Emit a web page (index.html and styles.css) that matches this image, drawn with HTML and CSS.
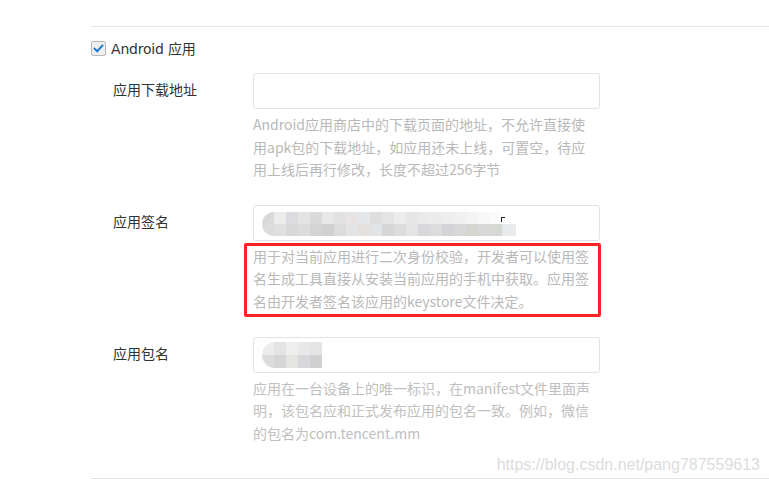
FILE: index.html
```html
<!DOCTYPE html>
<html lang="zh-CN">
<head>
<meta charset="utf-8">
<title>Android 应用</title>
<link rel="stylesheet" href="styles.css">
</head>
<body>
<div class="page">
  <div class="section">
    <label class="check-row">
      <span class="checkbox">
        <svg viewBox="0 0 12 12" width="11" height="11"><path d="M1.8 6.2 L4.6 9 L10.2 2.8" fill="none" stroke="#1b7fd4" stroke-width="2.2" stroke-linecap="square"/></svg>
      </span>
      <span class="check-label">Android 应用</span>
    </label>

    <div class="field">
      <div class="field-label">应用下载地址</div>
      <div class="field-body">
        <div class="input"></div>
        <p class="help">Android应用商店中的下载页面的地址，不允许直接使用apk包的下载地址，如应用还未上线，可置空，待应用上线后再行修改，长度不超过256字节</p>
      </div>
    </div>

    <div class="field">
      <div class="field-label">应用签名</div>
      <div class="field-body">
        <div class="input">
          <div class="blob blob-sign">
            <div class="blob-row row-a"></div>
            <div class="blob-row row-b"></div>
            <span class="caret"></span>
          </div>
        </div>
        <p class="help marked">用于对当前应用进行二次身份校验，开发者可以使用签名生成工具直接从安装当前应用的手机中获取。应用签名由开发者签名该应用的keystore文件决定。</p>
      </div>
    </div>

    <div class="field">
      <div class="field-label">应用包名</div>
      <div class="field-body">
        <div class="input">
          <div class="blob blob-pkg">
            <div class="blob-row row-c"></div>
            <div class="blob-row row-d"></div>
          </div>
        </div>
        <p class="help narrow">应用在一台设备上的唯一标识，在manifest文件里面声明，该包名应和正式发布应用的包名一致。例如，微信的包名为com.tencent.mm</p>
      </div>
    </div>

    <div class="footer">
      <span class="watermark">https://blog.csdn.net/pang787559613</span>
    </div>
  </div>
</div>
</body>
</html>
```

FILE: styles.css
```css
*, *::before, *::after { box-sizing: border-box; }
html, body {
  margin: 0;
  padding: 0;
  background: #ffffff;
}
body {
  font-family: "Noto Sans CJK SC", "Noto Sans", sans-serif;
  color: #333333;
  width: 769px;
  height: 483px;
  overflow: hidden;
}
.page {
  padding: 26px 0 0 91px;
}
.section {
  border-top: 1px solid #e6e6e6;
  padding-top: 12px;
}
.check-row {
  display: flex;
  align-items: center;
  gap: 5px;
  height: 18px;
}
.checkbox {
  width: 15px;
  height: 15px;
  border: 1px solid #b9b9b9;
  border-radius: 2px;
  background: #eeeeee;
  display: flex;
  align-items: center;
  justify-content: center;
}
.check-label {
  font-family: "DejaVu Sans", "Noto Sans CJK SC", sans-serif;
  font-size: 14px;
  color: #333333;
  letter-spacing: -0.2px;
}
.field {
  display: flex;
  margin-top: 16px;
}
.field + .field {
  margin-top: 24px;
}
.field-label {
  width: 162px;
  padding-left: 22px;
  font-size: 14px;
  line-height: 32px;
  color: #333333;
}
.field-body {
  width: 347px;
}
.input {
  height: 36px;
  border: 1px solid #e3e3e3;
  border-radius: 3px;
  background: #fff;
  padding: 6px 0 0 8px;
}
.help {
  margin: 4px 0 0 0;
  font-size: 14px;
  line-height: 22.6px;
  color: #b9b9b9;
  width: 346px;
  word-break: break-all;
}
.help.narrow {
  color: #c0c0c0;
}
.marked {
  position: relative;
}
.marked::after {
  content: "";
  position: absolute;
  left: -9px;
  top: -2px;
  width: 357px;
  height: 74px;
  border: 3px solid #ff2222;
  border-radius: 2px;
}
.blob {
  position: relative;
  border-radius: 12px 0 0 12px;
  overflow: hidden;
}
.blob-row {
  height: 12px;
}
.blob-sign { width: 254px; height: 24px; }
.row-a {
  width: 240px;
  background: linear-gradient(90deg,
    #d9d9d9 0 12px, #ececea 12px 24px, #dcdce0 24px 36px, #e4e4e4 36px 48px,
    #dadada 48px 60px, #e8e8e8 60px 72px, #e2e2e2 72px 84px, #e8e4e4 84px 96px,
    #e4e8ea 96px 108px, #dedede 108px 120px, #e4e4e4 120px 132px, #ececec 132px 144px,
    #e6e6e6 144px 156px, #eaeaea 156px 168px, #ececec 168px 180px, #eeeeee 180px 192px,
    #f0f0f0 192px 204px, #f4f4f4 204px 216px, #f8f8f8 216px 228px, #fbfbfb 228px 240px);
}
.row-b {
  width: 254px;
  background: linear-gradient(90deg,
    #dcdcdc 0 12px, #e0e0e0 12px 24px, #d8d8d8 24px 36px, #dcdcdc 36px 48px,
    #d4d4d4 48px 60px, #d0d0d0 60px 72px, #dcdcdc 72px 84px, #e2e4e6 84px 96px,
    #e4e0de 96px 108px, #e0e4e6 108px 120px, #d6d6d6 120px 132px, #dcdcdc 132px 144px,
    #e4e4e4 144px 156px, #d8d8dc 156px 168px, #dcdcdc 168px 180px, #d4d4d8 180px 192px,
    #d8d8d8 192px 204px, #d4d6d0 204px 216px, #d8d8d8 216px 228px, #d6d8d4 228px 240px,
    #e8eaec 240px 254px);
}
.caret {
  position: absolute;
  left: 239px;
  top: 5px;
  width: 4px;
  height: 5px;
  border-left: 1px solid #222;
  border-top: 1px solid #222;
}
.blob-pkg { width: 60px; height: 26px; margin-top: -2px; border-radius: 13px 0 0 13px; }
.row-c {
  height: 13px;
  background: linear-gradient(90deg,
    #ececec 0 12px, #e4e4e4 12px 24px, #eeeeee 24px 36px, #e8e8e8 36px 48px, #e4e4e4 48px 60px);
}
.row-d {
  height: 13px;
  background: linear-gradient(90deg,
    #dcdcdc 0 12px, #d6d6d6 12px 24px, #e4e4e0 24px 36px, #d8d8dc 36px 48px, #d0d0d0 48px 60px);
}
.footer {
  margin-top: 34px;
  border-bottom: 1px solid #e6e6e6;
  position: relative;
}
.watermark {
  position: absolute;
  right: 9px;
  top: -22px;
  font-family: "Liberation Sans", Arial, sans-serif;
  font-size: 16px;
  color: #dcdcdc;
}
```
